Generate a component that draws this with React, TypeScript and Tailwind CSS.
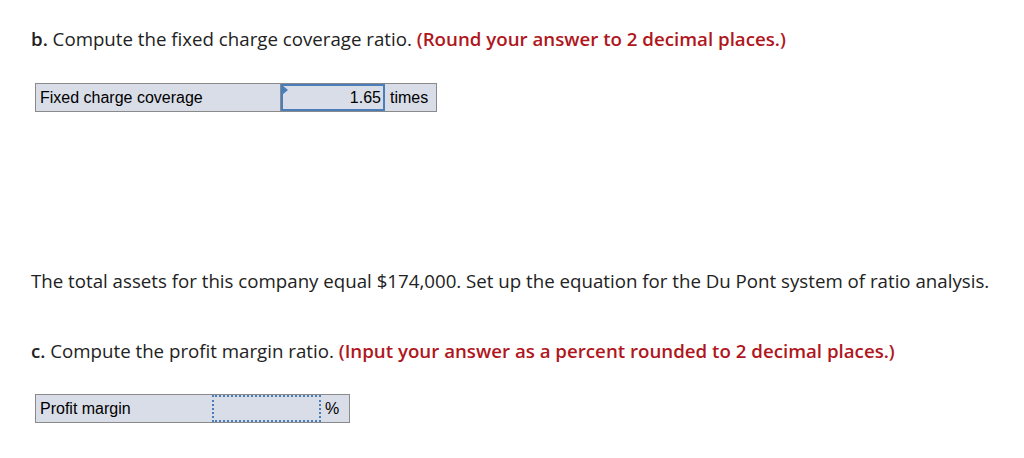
export default function App() {
  return (
    <div className="w-[1024px] h-[458px] bg-white text-[#222] font-['Open_Sans','Lato',sans-serif] overflow-hidden">
      <div className="pl-[31px] pt-[28px]">
        <p className="text-[18.7px] leading-[22px]">
          <b className="font-semibold">b.</b> Compute the fixed charge coverage ratio.{" "}
          <b className="font-semibold text-[#b0161d]">(Round your answer to 2 decimal places.)</b>
        </p>

        <div className="mt-[33px] ml-[4px] flex h-[29px] w-[402px] border border-[#8a8a8a] bg-[#d9dde8] font-['Liberation_Sans',Arial,sans-serif] text-[16px] text-black">
          <div className="w-[245px] border-r border-[#8a8a8a] px-[4px] leading-[27px]">Fixed charge coverage</div>
          <div className="relative w-[104px] border-2 border-[#4a7ebb] bg-[#d9dde8] pr-[2px] text-right leading-[23px]">
            <span className="absolute left-[-1px] top-[-1px] h-0 w-0 border-y-[5px] border-l-[6px] border-y-transparent border-l-[#4a7ebb]" />
            1.65
          </div>
          <div className="flex-1 px-[5px] leading-[27px]">times</div>
        </div>

        <p className="mt-[158px] text-[18.7px] leading-[22px]">
          The total assets for this company equal $174,000. Set up the equation for the Du Pont system of ratio analysis.
        </p>

        <p className="mt-[48px] text-[18.7px] leading-[22px]">
          <b className="font-semibold">c.</b> Compute the profit margin ratio.{" "}
          <b className="font-semibold text-[#b0161d]">(Input your answer as a percent rounded to 2 decimal places.)</b>
        </p>

        <div className="mt-[32px] ml-[4px] flex h-[29px] w-[315px] border border-[#8a8a8a] bg-[#d9dde8] font-['Liberation_Sans',Arial,sans-serif] text-[16px] text-black">
          <div className="w-[176px] px-[4px] leading-[27px]">Profit margin</div>
          <div className="w-[109px] border-2 border-dotted border-[#4a7ebb]" />
          <div className="flex-1 px-[4px] leading-[27px]">%</div>
        </div>
      </div>
    </div>
  );
}
